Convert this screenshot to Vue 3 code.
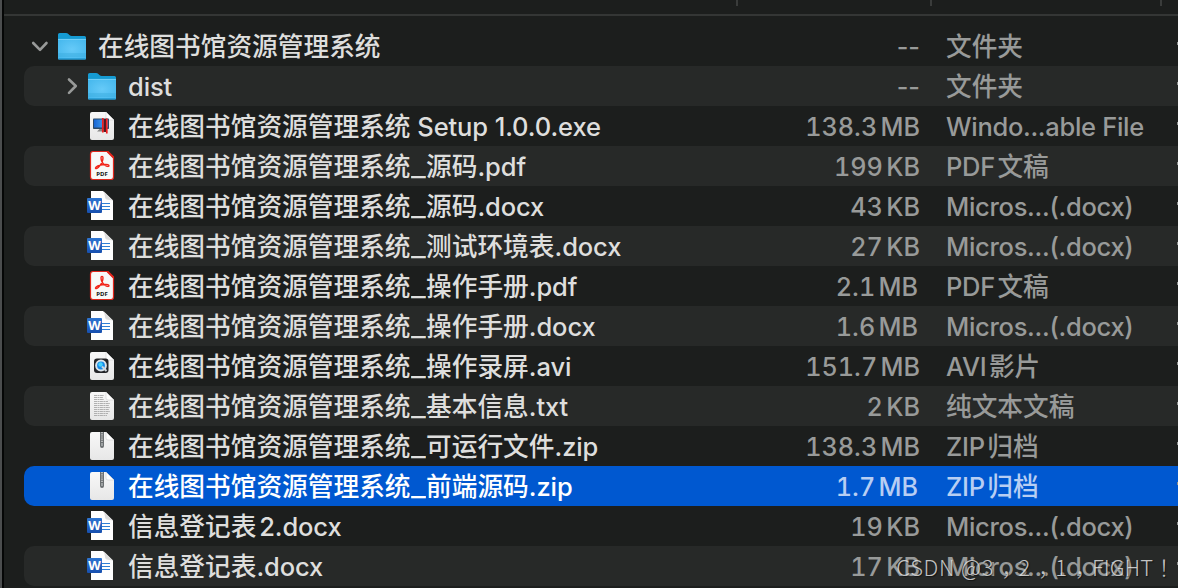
<script setup>
import { ref } from 'vue'

const files = ref([
  { id: 1, icon: 'folder', name: '在线图书馆资源管理系统', size: '--', kind: '文件夹', level: 0, open: true },
  { id: 2, icon: 'folder', name: 'dist', size: '--', kind: '文件夹', level: 1, open: false },
  { id: 3, icon: 'exe', name: '在线图书馆资源管理系统 Setup 1.0.0.exe', size: '138.3 MB', kind: 'Windo...able File', level: 1 },
  { id: 4, icon: 'pdf', name: '在线图书馆资源管理系统_源码.pdf', size: '199 KB', kind: 'PDF 文稿', level: 1 },
  { id: 5, icon: 'word', name: '在线图书馆资源管理系统_源码.docx', size: '43 KB', kind: 'Micros...(.docx)', level: 1 },
  { id: 6, icon: 'word', name: '在线图书馆资源管理系统_测试环境表.docx', size: '27 KB', kind: 'Micros...(.docx)', level: 1 },
  { id: 7, icon: 'pdf', name: '在线图书馆资源管理系统_操作手册.pdf', size: '2.1 MB', kind: 'PDF 文稿', level: 1 },
  { id: 8, icon: 'word', name: '在线图书馆资源管理系统_操作手册.docx', size: '1.6 MB', kind: 'Micros...(.docx)', level: 1 },
  { id: 9, icon: 'avi', name: '在线图书馆资源管理系统_操作录屏.avi', size: '151.7 MB', kind: 'AVI 影片', level: 1 },
  { id: 10, icon: 'txt', name: '在线图书馆资源管理系统_基本信息.txt', size: '2 KB', kind: '纯文本文稿', level: 1 },
  { id: 11, icon: 'zip', name: '在线图书馆资源管理系统_可运行文件.zip', size: '138.3 MB', kind: 'ZIP 归档', level: 1 },
  { id: 12, icon: 'zip', name: '在线图书馆资源管理系统_前端源码.zip', size: '1.7 MB', kind: 'ZIP 归档', level: 1 },
  { id: 13, icon: 'word', name: '信息登记表 2.docx', size: '19 KB', kind: 'Micros...(.docx)', level: 1 },
  { id: 14, icon: 'word', name: '信息登记表.docx', size: '17 KB', kind: 'Micros...(.docx)', level: 1 }
])
const selected = ref(12)

// Split a label into Chinese, underscore and Latin runs
function runs(text) {
  return text.match(/[\u4e00-\u9fff]+|_|[^\u4e00-\u9fff_]+/g).map((t) => ({
    text: t,
    type: runType(t)
  }))
}

function runType(t) {
  if (/[\u4e00-\u9fff]/.test(t)) return 'han'
  if (t === '_') return 'underscore'
  // a single space next to Chinese text is set narrower
  return t !== t.trim() && !t.trim().includes(' ') ? 'latin tight' : 'latin'
}

function toggle(file) {
  if (file.icon === 'folder') file.open = !file.open
}
</script>

<template>
  <div class="finder">
    <div class="columns">
      <span class="col-name"></span>
      <span class="col-size"></span>
      <span class="col-kind"></span>
    </div>

    <ul class="list">
      <li
        v-for="file in files"
        :key="file.id"
        class="row"
        :class="{ selected: file.id === selected, nested: file.level }"
        @click="selected = file.id"
      >
        <div class="arrow" @click.stop="toggle(file)">
          <svg v-if="file.icon === 'folder'" :class="{ open: file.open }" width="20" height="20" viewBox="0 0 20 20">
            <path d="M7 3.500 13.800 10 7 16.800" fill="none" stroke="#989a99" stroke-width="2.6" stroke-linecap="round" stroke-linejoin="round" />
          </svg>
        </div>

        <svg class="icon" width="32" height="32" viewBox="0 0 32 32">
          <g v-if="file.icon === 'folder'">
            <path d="M2 4.6Q2 3 3.6 3H10q1.4 0 2.4 1l1.3 1.2q.8.8 2 .8h12.8Q30 6 30 7.5V15H2z" fill="#159bd3" />
            <rect x="2" y="9" width="28" height="20.500" rx="1" fill="url(#folder-face)" />
            <path d="M2 9.400h28" stroke="#80d8fa" stroke-width=".8" />
            <path d="M2 24h28M2 26h28" stroke="#37a9dc" stroke-width=".8" />
            <path d="M2.500 29h27" stroke="#188ec4" stroke-width="1.200" />
          </g>
          <g v-else-if="file.icon === 'word'">
            <path d="M5 1h12l10 9.500V30H5z" fill="#fefefe" />
            <path d="M18 1.500l9 9-5-.8q-3 0-3-3z" fill="#dcdcdc" />
            <path d="M16 13.500h8M16 16.500h8M16 19.500h8" stroke="#2f7fd6" stroke-width="1.200" />
            <rect x="1" y="8" width="15" height="15" rx="1" fill="url(#word-face)" />
            <text x="8.500" y="19.900" class="word-letter">W</text>
          </g>
          <g v-else>
            <path v-if="file.icon !== 'pdf'" d="M6 2h14l8 8v18q0 2-2 2H6q-2 0-2-2V4q0-2 2-2z" fill="url(#paper)" />
            <path v-if="file.icon !== 'pdf'" d="M20 2l8 8h-6q-2 0-2-2z" fill="#fff" stroke="#c4c4c4" stroke-width=".5" />

            <g v-if="file.icon === 'exe'">
              <rect x="7" y="8.500" width="16" height="10.500" rx=".8" fill="#2c4a68" />
              <rect x="8" y="9.500" width="14" height="8" fill="url(#screen)" />
              <path d="M11 21.500l2.500-2.500h4l2 2.500z" fill="#8a8a8a" />
              <rect x="17.500" y="9" width="2.500" height="13" fill="#4b1b24" />
              <path d="M16.800 8v14.500M20.800 8.500V23.500" stroke="#f21d1d" stroke-width="1.700" />
            </g>
            <g v-else-if="file.icon === 'pdf'">
              <path d="M7 1.500h14.500l6 6V27q0 2.500-2.500 2.500H7Q4.500 29.500 4.500 27V4Q4.500 1.500 7 1.500z" fill="#f8f8f8" stroke="#e1251b" stroke-width="1.200" />
              <path d="M21.500 1.500l6 6" stroke="#e1251b" stroke-width="2" />
              <path d="M9.500 18c.5-2 5-3 8.500-3.500s5 .3 5 1.200-2 1.200-4-.5c-3-2.300-4-5.500-4-7.500 0-1.800 2-1.800 2 0 0 3-2.500 7.500-4.500 9.500-1.700 1.800-3.200 1.700-3 .8z" fill="none" stroke="#f22318" stroke-width="1.400" />
              <text x="16" y="26.300" class="pdf-label">PDF</text>
            </g>
            <g v-else-if="file.icon === 'avi'">
              <rect x="8" y="8.500" width="14.500" height="14.500" rx="3" fill="#232427" />
              <circle cx="15" cy="15.500" r="4.900" fill="#168ae8" stroke="#dbe3ea" stroke-width="2" />
              <circle cx="14.500" cy="14.500" r="2.200" fill="#45d2fc" />
              <path d="M16 16.500l4.500 4.500" stroke="#cfd6dc" stroke-width="2" />
            </g>
            <g v-else-if="file.icon === 'txt'" stroke="#b0b0b0" stroke-width="1">
              <path d="M8 5.500h10M8 7.500h9M8 9.500h10M8 11.500h14M8 13.500h16M8 15.500h15M8 17.500h16M8 19.500h15M8 21.500h16M8 23.500h14M8 25.500h13" stroke-dasharray="3 .5 2 .4" />
            </g>
            <g v-else>
              <path d="M14 2h4v14q0 2-2 2t-2-2z" fill="#6c7072" />
              <path d="M16 2v10" stroke="#d6d8d8" stroke-width="1.400" stroke-dasharray="1.200 1" />
              <path d="M16 13v3" stroke="#c0c3c4" stroke-width="1.200" />
            </g>
          </g>
        </svg>

        <span class="name"><span v-for="(r, i) in runs(file.name)" :key="i" :class="r.type">{{ r.text }}</span></span>
        <span class="size" :class="{ mega: /^\d\.\d/.test(file.size), none: file.size === '--' }">{{ file.size }}</span>
        <span class="kind"><span v-for="(r, i) in runs(file.kind)" :key="i" :class="r.type">{{ r.text }}</span></span>
        <span class="edge"></span>
      </li>
    </ul>

    <div class="watermark"><span class="site">CSDN @</span>3<i>，</i>2<i>，</i>1<i>，</i>FIGHT！</div>

    <svg class="defs" width="0" height="0">
      <defs>
        <radialGradient id="folder-face" cx=".5" cy=".5" r=".7">
          <stop offset="0" stop-color="#66caf8" />
          <stop offset="1" stop-color="#43b6ec" />
        </radialGradient>
        <linearGradient id="word-face" x1="0" y1="0" x2="0" y2="1">
          <stop offset="0" stop-color="#2f76d2" />
          <stop offset="1" stop-color="#174fae" />
        </linearGradient>
        <linearGradient id="paper" x1="0" y1="0" x2="0" y2="1">
          <stop offset="0" stop-color="#f8f8f8" />
          <stop offset="1" stop-color="#e7e7e7" />
        </linearGradient>
        <linearGradient id="screen">
          <stop offset="0" stop-color="#1765d5" />
          <stop offset="1" stop-color="#55b7f6" />
        </linearGradient>
      </defs>
    </svg>
  </div>
</template>

<style>
body {
  margin: 0;
  background: #1c1e1d;
}
</style>

<style scoped>
.finder {
  position: relative;
  box-sizing: border-box;
  width: 1178px;
  height: 588px;
  overflow: hidden;
  border-left: 2px solid #4b4d4e;
  box-shadow: inset 2px 0 #050606;
  background: #1c1e1d;
  color: #dededd;
  font: 500 25.5px/40px Inter, "Noto Sans CJK SC", sans-serif;
}

.columns {
  display: flex;
  box-sizing: border-box;
  height: 16px;
  margin-left: 2px;
  border-bottom: 2px solid #343635;
}

.columns span {
  box-sizing: border-box;
  height: 6px;
  border-right: 2px solid #3a3c3b;
}

.col-name {
  width: 734px;
}

.col-size {
  width: 194px;
}

.col-kind {
  width: 230px;
}

.list {
  margin: 10px 0 0 22px;
  padding: 0;
  list-style: none;
}

.row {
  display: flex;
  align-items: center;
  height: 40px;
  border-radius: 10px 0 0 10px;
  white-space: pre;
}

.row:nth-child(even) {
  background: #272928;
}

.row.selected {
  background: #0058d0;
  color: #fff;
}

.arrow {
  display: flex;
  flex: none;
  width: 26px;
  height: 20px;
  margin-left: 6px;
}

.nested .arrow {
  width: 24px;
  margin-left: 38px;
}

.arrow .open {
  transform: rotate(90deg);
}

.icon {
  flex: none;
  margin-right: 10px;
}

.name,
.size,
.kind {
  height: 40px;
  padding-top: 2px;
}

.name {
  flex: 1;
}

.han {
  font-family: "Noto Sans CJK SC", sans-serif;
  font-size: 25.7px;
  line-height: 0;
}

.name .latin {
  letter-spacing: -0.1px;
}

.underscore {
  display: inline-block;
  width: 15.5px;
  transform: scaleX(1.25);
  transform-origin: left;
}

.latin.tight {
  word-spacing: -4px;
}

.size {
  flex: none;
  width: 140px;
  margin-right: 26px;
  color: #989a99;
  font-size: 25.2px;
  font-variant-numeric: tabular-nums;
  font-weight: 450;
  text-align: right;
  word-spacing: -3.5px;
}

.size.mega {
  padding-right: 2px;
  width: 138px;
}

.size.none {
  font-variant-numeric: normal;
}

.kind {
  flex: none;
  width: 230px;
  color: #989a99;
  font-weight: 450;
}

.kind .latin {
  letter-spacing: -0.3px;
}

.selected .size,
.selected .kind {
  color: #b7cef3;
}

.edge {
  flex: none;
  width: 2px;
  height: 3px;
  margin-bottom: 5px;
  background: linear-gradient(to right, transparent 50%, #8b8d8c 50%);
}

.watermark {
  position: absolute;
  right: 3px;
  bottom: 2px;
  color: rgba(225, 225, 225, 0.85);
  font: 300 22px/40px "Noto Sans CJK TC", sans-serif;
  white-space: nowrap;
  text-shadow: 1px 1px 1px rgba(0, 0, 0, 0.5);
}

.watermark .site {
  letter-spacing: 0.7px;
}

.watermark i {
  margin: 0 -5px 0 8px;
  font-family: "Noto Sans CJK SC", sans-serif;
  font-style: normal;
  line-height: 0;
}

.word-letter {
  fill: #fff;
  font: 700 13px "Open Sans", sans-serif;
  text-anchor: middle;
}

.pdf-label {
  fill: #111;
  font: 700 6px "Open Sans", sans-serif;
  text-anchor: middle;
}

.defs {
  position: absolute;
}
</style>
